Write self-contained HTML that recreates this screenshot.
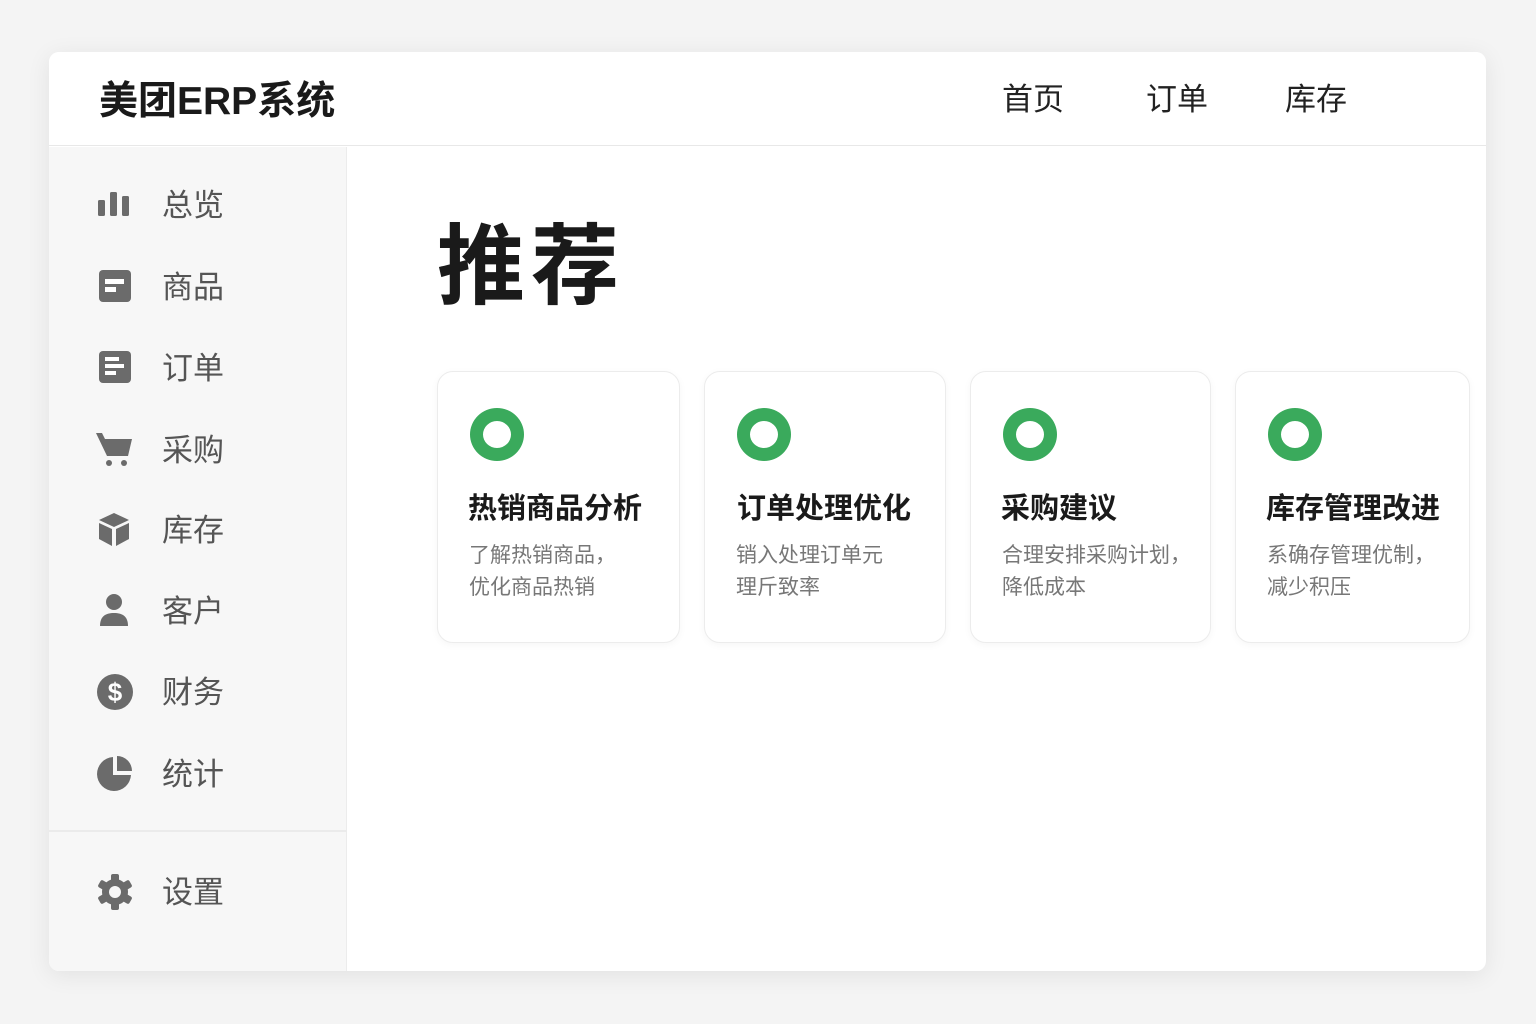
<!DOCTYPE html>
<html><head><meta charset="utf-8"><style>
*{margin:0;padding:0;box-sizing:border-box}
body{width:1536px;height:1024px;background:#f4f4f4;font-family:"Liberation Sans","Noto Sans CJK SC",sans-serif;position:relative;overflow:hidden}
.frame{position:absolute;left:49px;top:52px;width:1437px;height:919px;background:#fff;border-radius:10px;box-shadow:0 4px 24px rgba(0,0,0,.08);overflow:hidden}
.hdr{position:absolute;left:0;top:0;width:100%;height:94px;border-bottom:1px solid #e8e8e8;background:#fff}
.logo{position:absolute;left:50px;top:18px;font-size:39px;font-weight:bold;color:#1a1a1a}
.nav{position:absolute;top:22px;font-size:31px;color:#222}
.side{position:absolute;left:0;top:95px;width:298px;height:824px;background:#f7f7f7;border-right:1px solid #ececec}
.it{position:absolute;left:0;height:40px;width:298px}
.it svg{position:absolute;left:47px;top:2px}
.it span{position:absolute;left:113px;top:-4px;font-size:31px;color:#555}
.div{position:absolute;left:0;top:683px;width:298px;height:2px;background:#ebebeb}
.title{position:absolute;left:388px;top:144px;font-size:88px;font-weight:bold;color:#1a1a1a;letter-spacing:6px}
.card{position:absolute;top:319px;height:272px;background:#fff;border:1.5px solid #ececec;border-radius:16px;box-shadow:0 2px 8px rgba(0,0,0,.04)}
.ring{position:absolute;left:32px;top:36px;width:54px;height:53px;border:13px solid #3aaa5c;border-radius:50%}
.ct{position:absolute;left:30px;top:113px;font-size:29px;font-weight:bold;color:#1a1a1a;white-space:nowrap}
.cd{position:absolute;left:31px;top:168px;font-size:21px;color:#777;line-height:32px;white-space:nowrap}
</style></head><body>
<div class="frame">
<div class="hdr"><div class="logo">美团ERP系统</div>
<div class="nav" style="left:953px">首页</div><div class="nav" style="left:1097px">订单</div><div class="nav" style="left:1236px">库存</div></div>
<div class="side">
<div class="it" style="top:37px"><svg width="36" height="36" viewBox="0 0 36 36" fill="#6b6b6b"><rect x="2" y="14" width="7" height="16" rx="1.5"/><rect x="14" y="6" width="7" height="24" rx="1.5"/><rect x="26" y="10" width="7" height="20" rx="1.5"/></svg><span>总览</span></div>
<div class="it" style="top:119px"><svg width="36" height="36" viewBox="0 0 36 36"><rect x="3" y="2" width="32" height="32" rx="4" fill="#6b6b6b"/><rect x="9" y="11" width="19" height="5" fill="#fff"/><rect x="9" y="19" width="11" height="5" fill="#fff"/></svg><span>商品</span></div>
<div class="it" style="top:200px"><svg width="36" height="36" viewBox="0 0 36 36"><rect x="3" y="2" width="32" height="32" rx="4" fill="#6b6b6b"/><rect x="9" y="8" width="14" height="4" fill="#fff"/><rect x="9" y="15" width="19" height="4" fill="#fff"/><rect x="9" y="22" width="11" height="4" fill="#fff"/></svg><span>订单</span></div>
<div class="it" style="top:282px"><svg width="40" height="38" viewBox="0 0 40 38" fill="#6b6b6b"><path d="M0 2h6l3 6h27l-4 17H11z"/><circle cx="13" cy="32" r="3"/><circle cx="28" cy="32" r="3"/></svg><span>采购</span></div>
<div class="it" style="top:362px"><svg width="36" height="38" viewBox="0 0 36 38" fill="#6b6b6b"><path d="M18 2l15 7-15 7-15-7z"/><path d="M3 12l13 6v17L3 28z"/><path d="M33 12l-13 6v17l13-7z"/></svg><span>库存</span></div>
<div class="it" style="top:443px"><svg width="36" height="38" viewBox="0 0 36 38" fill="#6b6b6b"><circle cx="18" cy="10" r="8"/><path d="M4 34c0-10 6-13 14-13s14 3 14 13z"/></svg><span>客户</span></div>
<div class="it" style="top:524px"><svg width="38" height="38" viewBox="0 0 38 38"><circle cx="19" cy="19" r="18" fill="#6b6b6b"/><text x="19" y="28" text-anchor="middle" font-size="26" font-weight="bold" fill="#fff" font-family="Liberation Sans">$</text></svg><span>财务</span></div>
<div class="it" style="top:606px"><svg width="38" height="38" viewBox="0 0 38 38" fill="#6b6b6b"><path d="M17 2A17 17 0 1 0 35 20H17z"/><path d="M21 1a15 15 0 0 1 15 15H21z"/></svg><span>统计</span></div>
<div class="div"></div>
<div class="it" style="top:724px"><svg width="38" height="38" viewBox="0 0 38 38"><g fill="#6b6b6b" transform="translate(19 19)"><circle r="13"/><rect x="-4" y="-18" width="8" height="36" rx="2"/><rect x="-4" y="-18" width="8" height="36" rx="2" transform="rotate(60)"/><rect x="-4" y="-18" width="8" height="36" rx="2" transform="rotate(120)"/></g><circle cx="19" cy="19" r="6" fill="#f7f7f7"/></svg><span>设置</span></div>
</div>
<div class="title">推荐</div>
<div class="card" style="left:388px;width:243px"><div class="ring"></div><div class="ct">热销商品分析</div><div class="cd">了解热销商品，<br>优化商品热销</div></div>
<div class="card" style="left:655px;width:242px"><div class="ring"></div><div class="ct" style="left:32px">订单处理优化</div><div class="cd">销入处理订单元<br>理斤致率</div></div>
<div class="card" style="left:921px;width:241px"><div class="ring"></div><div class="ct">采购建议</div><div class="cd">合理安排采购计划，<br>降低成本</div></div>
<div class="card" style="left:1186px;width:235px"><div class="ring"></div><div class="ct">库存管理改进</div><div class="cd">系确存管理优制，<br>减少积压</div></div>
</div>
</body></html>
